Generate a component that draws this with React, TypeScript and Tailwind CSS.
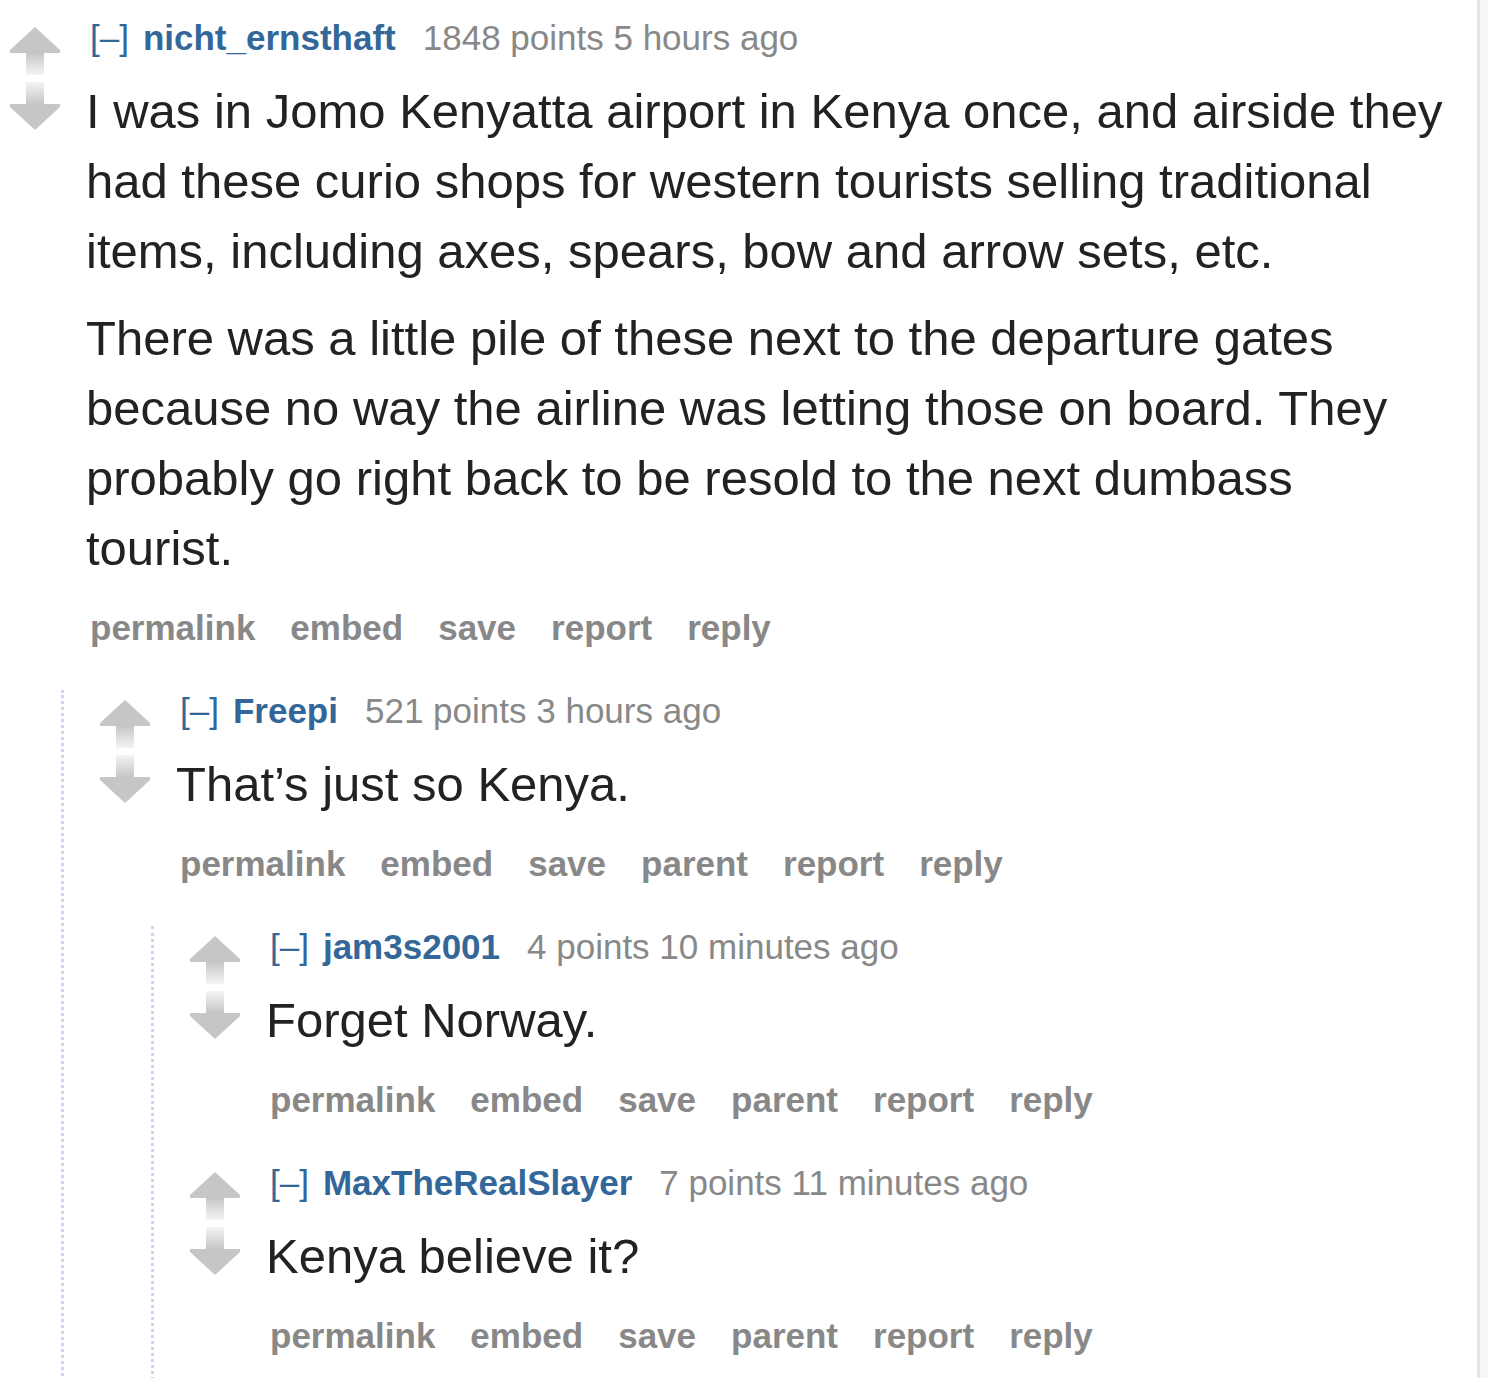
import React from 'react';

type CommentData = {
  id: string;
  author: string;
  score: string;
  time: string;
  body: string[];
  isChild?: boolean;
  replies?: CommentData[];
};

const comments: CommentData[] = [
  {
    id: 'c1',
    author: 'nicht_ernsthaft',
    score: '1848 points',
    time: '5 hours ago',
    body: [
      'I was in Jomo Kenyatta airport in Kenya once, and airside they had these curio shops for western tourists selling traditional items, including axes, spears, bow and arrow sets, etc.',
      'There was a little pile of these next to the departure gates because no way the airline was letting those on board. They probably go right back to be resold to the next dumbass tourist.',
    ],
    replies: [
      {
        id: 'c2',
        author: 'Freepi',
        score: '521 points',
        time: '3 hours ago',
        body: ['That’s just so Kenya.'],
        isChild: true,
        replies: [
          {
            id: 'c3',
            author: 'jam3s2001',
            score: '4 points',
            time: '10 minutes ago',
            body: ['Forget Norway.'],
            isChild: true,
          },
          {
            id: 'c4',
            author: 'MaxTheRealSlayer',
            score: '7 points',
            time: '11 minutes ago',
            body: ['Kenya believe it?'],
            isChild: true,
          },
        ],
      },
    ],
  },
];

const Arrow = ({ down = false, id }: { down?: boolean; id: string }) => (
  <svg width="52" height="49" viewBox="0 0 52 49" className={down ? 'block mt-[7px] rotate-180' : 'block'}>
    <defs>
      <linearGradient id={id} x1="0" y1="0" x2="0" y2="1">
        <stop offset="0%" stopColor="#c6c6c6" />
        <stop offset="100%" stopColor="#f4f4f4" />
      </linearGradient>
    </defs>
    <polygon points="26,1 51,24 51,27 1,27 1,24" fill="#c6c6c6" />
    <rect x="17" y="27" width="18" height="22" fill={`url(#${id})`} />
  </svg>
);

const Comment = ({ c }: { c: CommentData }) => {
  const buttons = c.isChild
    ? ['permalink', 'embed', 'save', 'parent', 'report', 'reply']
    : ['permalink', 'embed', 'save', 'report', 'reply'];

  return (
    <div>
      <div className="flex">
        <div className="w-[52px] shrink-0 mt-[9px]">
          <Arrow id={`${c.id}-up`} />
          <Arrow id={`${c.id}-down`} down />
        </div>
        <div className="flex-1 min-w-0 ml-[29px]">
          {/* tagline */}
          <div className="text-[35px] leading-[42px] whitespace-nowrap">
            <span className="text-[#369]">[–]</span>
            <span className="ml-[14px] font-bold text-[#369]">{c.author}</span>
            <span className="ml-[27px] text-[#888]">{c.score} {c.time}</span>
          </div>
          {/* body */}
          <div className="mt-[17px] -ml-[4px] text-[49px] leading-[70px] text-[#222] space-y-[17px]">
            {c.body.map((p, i) => (
              <p key={i}>{p}</p>
            ))}
          </div>
          {/* buttons */}
          <ul className="mt-[24px] flex gap-[35px] text-[35px] leading-[42px] font-bold text-[#888]">
            {buttons.map(b => (
              <li key={b}>{b}</li>
            ))}
          </ul>
        </div>
      </div>

      {c.replies && c.replies.length > 0 && (
        <div className="mt-[41px] ml-[52px] pl-[35px] pb-[60px] border-l-[3px] border-dotted border-[#d2d2f7] space-y-[41px]">
          {c.replies.map(r => (
            <Comment key={r.id} c={r} />
          ))}
        </div>
      )}
    </div>
  );
};

export default function App() {
  return (
    <div className="h-[1378px] overflow-hidden flex bg-white font-['Liberation_Sans',Arial,sans-serif]">
      <div className="w-[1477px] shrink-0 pt-[17px] pl-[9px] pr-[28px]">
        {comments.map(c => (
          <Comment key={c.id} c={c} />
        ))}
      </div>
      <div className="w-[3px] shrink-0 bg-[#dfe5e8]" />
      <div className="flex-1 bg-[#f6f6f6]" />
    </div>
  );
}
